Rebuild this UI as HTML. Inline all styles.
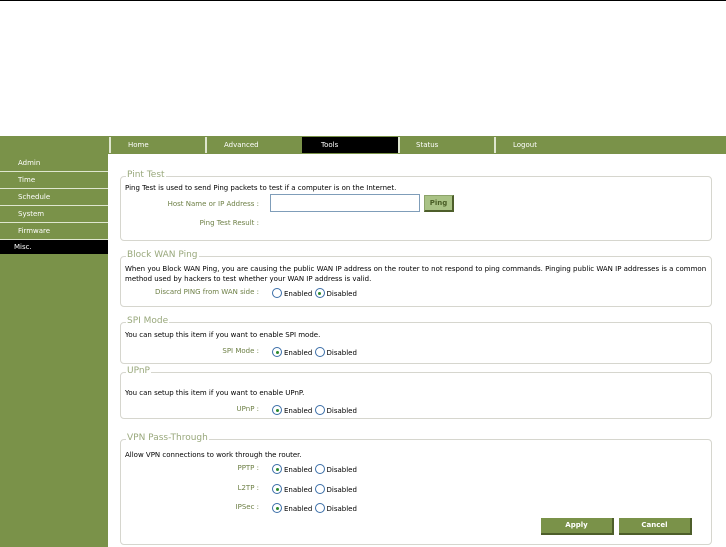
<!DOCTYPE html>
<html><head><style>
body{margin:0;width:726px;height:547px;background:#fff;position:relative;overflow:hidden;font-family:"DejaVu Sans","Liberation Sans",sans-serif;font-size:7px;color:#000}
.a{position:absolute;white-space:nowrap}
.topline{left:0;top:0;width:726px;height:1px;background:#000}
.nav{left:0;top:136px;width:726px;height:18px;background:#7a9249}
.side{left:0;top:136px;width:108px;height:411px;background:#7a9249}
.tab{top:137px;height:16px;color:#fff;line-height:16px}
.sep{top:137px;width:2px;height:16px;background:#dfe6cf}
.si{left:0;width:108px;height:16px;color:#fff;line-height:16px;border-bottom:1px solid #dfe6cf}
.fs{left:120px;width:590px;border:1px solid #d6d6ce;border-radius:4px}
.lg{background:#fff;color:#99a87c;font-size:9px;padding:0 1px;left:126px}
.lab{color:#6d7f45;text-align:right;width:140px}
.r{display:inline-block;width:8px;height:8px;border:1px solid #3b6ea8;border-radius:50%;vertical-align:-2px;margin-right:2px;background:#fff;position:relative}
.r.on:after{content:"";position:absolute;left:2.5px;top:2.5px;width:3px;height:3px;border-radius:50%;background:#2d8a2d}
.btn{background:#7a9249;color:#fff;font-weight:bold;text-align:center;line-height:15px;height:15px;border-right:2px solid #4d5e2a;border-bottom:2px solid #4d5e2a}
</style></head><body>
<div class="a topline"></div>
<div class="a nav"></div>
<div class="a side"></div>
<div class="a sep" style="left:109px"></div>
<div class="a sep" style="left:205px"></div>
<div class="a" style="left:302px;top:137px;width:96px;height:16px;background:#000"></div>
<div class="a sep" style="left:398px"></div>
<div class="a sep" style="left:494px"></div>
<div class="a tab" style="left:128px">Home</div>
<div class="a tab" style="left:224px">Advanced</div>
<div class="a tab" style="left:321px">Tools</div>
<div class="a tab" style="left:416px">Status</div>
<div class="a tab" style="left:513px">Logout</div>
<div class="a si" style="top:155px"><span style="margin-left:18px">Admin</span></div>
<div class="a si" style="top:172px"><span style="margin-left:18px">Time</span></div>
<div class="a si" style="top:189px"><span style="margin-left:18px">Schedule</span></div>
<div class="a si" style="top:206px"><span style="margin-left:18px">System</span></div>
<div class="a si" style="top:223px"><span style="margin-left:18px">Firmware</span></div>
<div class="a si" style="top:240px;height:14px;line-height:14px;background:#000;border:0"><span style="margin-left:14px">Misc.</span></div>

<div class="a fs" style="top:176px;height:63px"></div>
<div class="a lg" style="top:170px">Pint Test</div>
<div class="a" style="left:125px;top:184px">Ping Test is used to send Ping packets to test if a computer is on the Internet.</div>
<div class="a lab" style="left:119px;top:200px">Host Name or IP Address :</div>
<div class="a" style="left:270px;top:194px;width:148px;height:16px;border:1px solid #7f9db9"></div>
<div class="a" style="left:424px;top:195px;width:27px;height:14px;background:#a9c285;border:1px solid #8ca36a;border-right:2px solid #4d5e2a;border-bottom:2px solid #4d5e2a;color:#4a5e26;font-weight:bold;text-align:center;line-height:14px">Ping</div>
<div class="a lab" style="left:119px;top:219px">Ping Test Result :</div>

<div class="a fs" style="top:256px;height:49px"></div>
<div class="a lg" style="top:250px">Block WAN Ping</div>
<div class="a" style="left:125px;top:264px;line-height:10px">When you Block WAN Ping, you are causing the public WAN IP address on the router to not respond to ping commands. Pinging public WAN IP addresses is a common<br>method used by hackers to test whether your WAN IP address is valid.</div>
<div class="a lab" style="left:119px;top:288px">Discard PING from WAN side :</div>
<div class="a" style="left:272px;top:288px"><span class="r"></span>Enabled <span class="r on"></span>Disabled</div>

<div class="a fs" style="top:322px;height:40px"></div>
<div class="a lg" style="top:316px">SPI Mode</div>
<div class="a" style="left:125px;top:331px">You can setup this item if you want to enable SPI mode.</div>
<div class="a lab" style="left:119px;top:347px">SPI Mode :</div>
<div class="a" style="left:272px;top:347px"><span class="r on"></span>Enabled <span class="r"></span>Disabled</div>

<div class="a fs" style="top:372px;height:45px"></div>
<div class="a lg" style="top:366px">UPnP</div>
<div class="a" style="left:125px;top:389px">You can setup this item if you want to enable UPnP.</div>
<div class="a lab" style="left:119px;top:405px">UPnP :</div>
<div class="a" style="left:272px;top:405px"><span class="r on"></span>Enabled <span class="r"></span>Disabled</div>

<div class="a fs" style="top:439px;height:104px"></div>
<div class="a lg" style="top:433px">VPN Pass-Through</div>
<div class="a" style="left:125px;top:451px">Allow VPN connections to work through the router.</div>
<div class="a lab" style="left:119px;top:464px">PPTP :</div>
<div class="a" style="left:272px;top:464px"><span class="r on"></span>Enabled <span class="r"></span>Disabled</div>
<div class="a lab" style="left:119px;top:484px">L2TP :</div>
<div class="a" style="left:272px;top:484px"><span class="r on"></span>Enabled <span class="r"></span>Disabled</div>
<div class="a lab" style="left:119px;top:503px">IPSec :</div>
<div class="a" style="left:272px;top:503px"><span class="r on"></span>Enabled <span class="r"></span>Disabled</div>
<div class="a btn" style="left:541px;top:518px;width:71px">Apply</div>
<div class="a btn" style="left:619px;top:518px;width:71px">Cancel</div>
</body></html>
